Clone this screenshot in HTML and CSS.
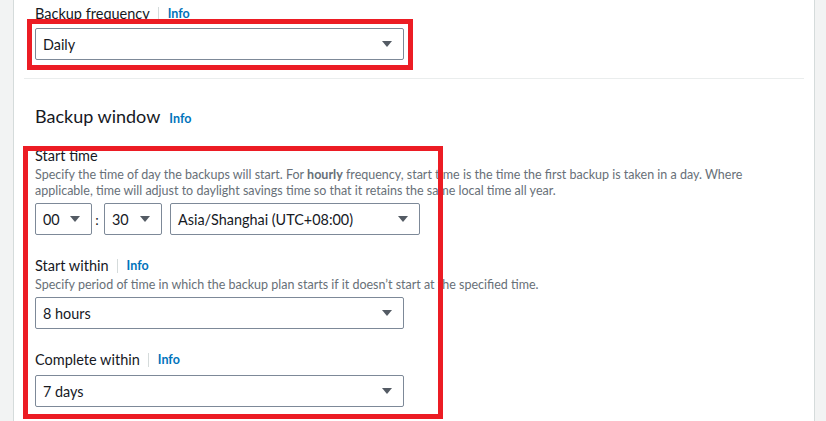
FILE: index.html
```html
<!DOCTYPE html>
<html lang="en">
<head>
<meta charset="utf-8">
<title>Backup plan</title>
<link rel="stylesheet" href="styles.css">
</head>
<body>
<div class="page">
  <div class="gutter gutter-left"></div>
  <main class="panel">
    <section class="top-section">
      <div class="field">
        <div class="label-row"><span class="label">Backup frequency</span><span class="sep"></span><a class="info">Info</a></div>
        <div class="annot annot-freq">
          <div class="select select-full"><span>Daily</span><svg class="caret" width="10" height="6" viewBox="0 0 10 6"><polygon points="0,0 10,0 5,6"/></svg></div>
        </div>
      </div>
    </section>
    <div class="divider"></div>
    <section class="window-section">
      <h2 class="heading"><span>Backup window</span><a class="info heading-info">Info</a></h2>
      <div class="annot annot-group">
        <div class="field">
          <div class="label-row"><span class="label">Start time</span></div>
          <p class="desc">Specify the time of day the backups will start. For <b>hourly</b> frequency, start time is the time the first backup is taken in a day. Where applicable, time will adjust to daylight savings time so that it retains the same local time all year.</p>
          <div class="time-row">
            <div class="select select-hour"><span>00</span><svg class="caret" width="10" height="6" viewBox="0 0 10 6"><polygon points="0,0 10,0 5,6"/></svg></div>
            <span class="colon">:</span>
            <div class="select select-min"><span>30</span><svg class="caret" width="10" height="6" viewBox="0 0 10 6"><polygon points="0,0 10,0 5,6"/></svg></div>
            <div class="select select-tz"><span>Asia/Shanghai (UTC+08:00)</span><svg class="caret" width="10" height="6" viewBox="0 0 10 6"><polygon points="0,0 10,0 5,6"/></svg></div>
          </div>
        </div>
        <div class="field field-spaced">
          <div class="label-row"><span class="label">Start within</span><span class="sep"></span><a class="info">Info</a></div>
          <p class="desc">Specify period of time in which the backup plan starts if it doesn’t start at the specified time.</p>
          <div class="select select-full"><span>8 hours</span><svg class="caret" width="10" height="6" viewBox="0 0 10 6"><polygon points="0,0 10,0 5,6"/></svg></div>
        </div>
        <div class="field field-spaced">
          <div class="label-row"><span class="label">Complete within</span><span class="sep"></span><a class="info">Info</a></div>
          <div class="select select-full select-gap"><span>7 days</span><svg class="caret" width="10" height="6" viewBox="0 0 10 6"><polygon points="0,0 10,0 5,6"/></svg></div>
        </div>
      </div>
    </section>
  </main>
  <div class="gutter gutter-right"></div>
</div>
</body>
</html>
```
FILE: styles.css
```css
*, *::before, *::after { box-sizing: border-box; }

html, body {
  margin: 0;
  padding: 0;
  height: 421px;
  overflow: hidden;
  background: #f2f3f3;
  font-family: Lato, "Open Sans", Arial, sans-serif;
  color: #16191f;
}

.page {
  display: flex;
  height: 421px;
}

.gutter { background: #f2f3f3; }
.gutter-left { width: 13px; }
.gutter-right { width: 11px; }

.panel {
  flex: 1;
  background: #ffffff;
  border-left: 1px solid #d5dbdb;
  border-right: 1px solid #d5dbdb;
}

.top-section {
  padding: 4px 21px 18px;
}

.label-row {
  display: flex;
  align-items: center;
  height: 20px;
}

.label {
  font-size: 14.5px;
  line-height: 20px;
  color: #16191f;
}

.sep {
  width: 1px;
  height: 14px;
  background: #d5dbdb;
  margin: 0 9px 0 8px;
}

.info {
  font-size: 12.5px;
  line-height: 16px;
  font-weight: 700;
  color: #0073bb;
  text-decoration: none;
}

.select {
  display: flex;
  align-items: center;
  justify-content: space-between;
  height: 32px;
  border: 1px solid #7d8998;
  border-radius: 2px;
  padding: 0 11px 0 7px;
  font-size: 14.4px;
  color: #16191f;
  background: #fff;
}

.select-full { width: 369px; }
.select-hour { width: 57px; }
.select-min { width: 58px; }
.select-tz { width: 250px; }

.caret { fill: #545b64; flex: none; }

.annot { position: relative; }
.annot::after {
  content: "";
  position: absolute;
  border: 5px solid #ec1c24;
  pointer-events: none;
  z-index: 2;
}

.annot-freq { margin-top: 4px; width: 369px; }
.annot-freq::after { top: -9px; left: -8px; right: -9px; bottom: -10px; }

.divider {
  height: 1px;
  background: #eaeded;
  margin: 0 10px;
}

.window-section {
  padding: 25px 21px 0;
}

.heading {
  display: flex;
  align-items: baseline;
  height: 24px;
  margin: 0;
  font-size: 18px;
  line-height: 24px;
  font-weight: 400;
  color: #16191f;
}

.heading-info { margin-left: 9px; }

.annot-group { margin-top: 18px; }
.annot-group::after { top: 0; left: -12px; width: 420px; bottom: -12px; }

.desc {
  margin: 1px 0 0;
  font-size: 12.5px;
  line-height: 16px;
  color: #687078;
}

.desc b { font-weight: 700; }

.time-row {
  display: flex;
  align-items: center;
  margin-top: 4px;
}

.colon {
  width: 10px;
  margin-right: 2px;
  text-align: center;
  font-size: 14px;
}

.select-tz { margin-left: 8px; }

.field-spaced { margin-top: 21px; }
.field-spaced .desc + .select { margin-top: 4px; }
.select-gap { margin-top: 5px; }
```
